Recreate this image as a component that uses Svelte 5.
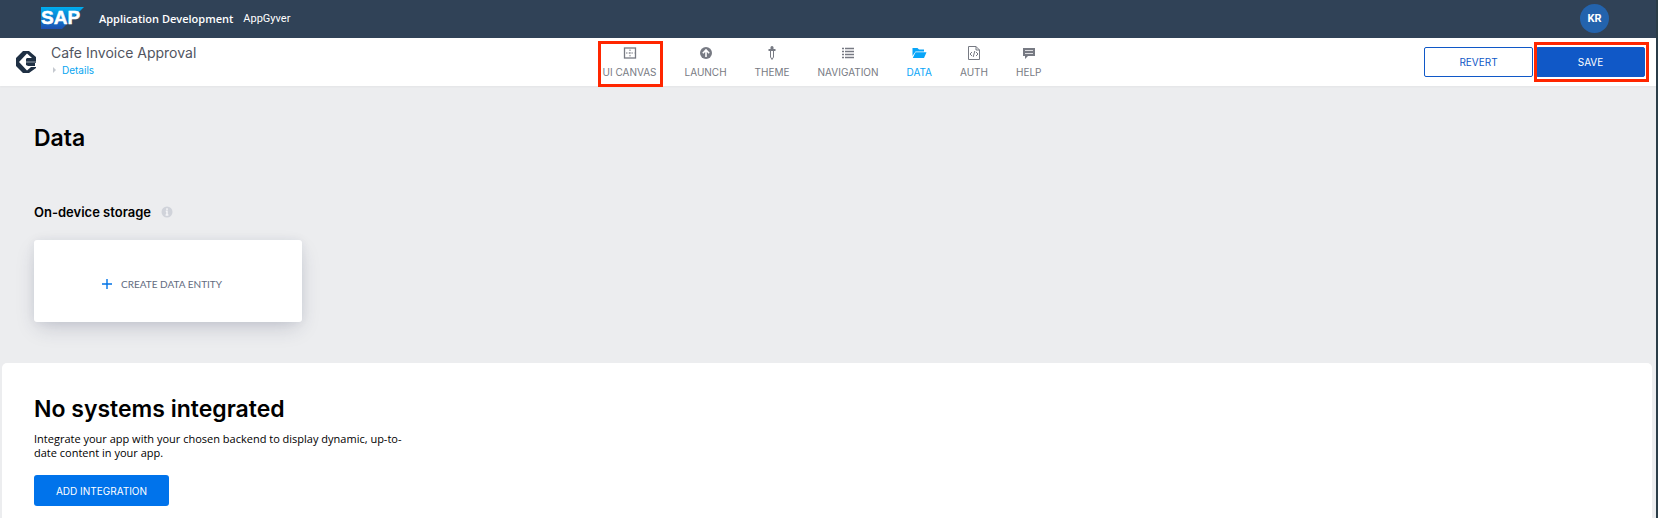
<script>
  const tools = [
    { id: 'canvas', label: 'UI CANVAS', marked: true },
    { id: 'launch', label: 'LAUNCH' },
    { id: 'theme', label: 'THEME' },
    { id: 'navigation', label: 'NAVIGATION' },
    { id: 'data', label: 'DATA' },
    { id: 'auth', label: 'AUTH' },
    { id: 'help', label: 'HELP' }
  ];
  let active = $state('data');
</script>

<div class="app">
  <header class="shell">
    <svg class="sap" width="43" height="22" viewBox="0 0 43 22" role="img" aria-label="SAP">
      <defs>
        <linearGradient id="sapFill" x1="0" y1="0" x2="0" y2="1">
          <stop offset="0" stop-color="#00aeef" />
          <stop offset="0.5" stop-color="#0c7fd0" />
          <stop offset="1" stop-color="#1d4eb0" />
        </linearGradient>
      </defs>
      <path d="M0 0H43L21 22H0Z" fill="url(#sapFill)" />
      <text x="0" y="17" class="sap-text">SAP</text>
    </svg>
    <strong>Application Development</strong>
    <span class="product">AppGyver</span>
    <button class="avatar" aria-label="Profile KR">KR</button>
  </header>

  <div class="toolbar">
    <div class="project">
      <svg width="20" height="22" viewBox="0 0 20 22" aria-hidden="true">
        <path d="M7 0H13L20 6V7H16L11 2.5L3 11L11 19.5L15 16H20V17L13 22H7L0 15V7Z" fill="#1f3044" />
        <path d="M11 7H20V10H10V8Z" fill="#1f3044" />
        <path d="M10 10H20V12H10Z" fill="#5a6877" />
        <path d="M10 12H19V15H12L10 14Z" fill="#1f3044" />
      </svg>
      <div class="names">
        <span class="title">Cafe Invoice Approval</span>
        <a href="#details"><i></i>Details</a>
      </div>
    </div>

    <nav>
      {#each tools as tool}
        <button class="tool" class:active={active === tool.id} class:marked={tool.marked} onclick={() => (active = tool.id)}>
          <svg width="16" height="16" viewBox="0 0 16 16" aria-hidden="true">
            {#if tool.id === 'canvas'}
              <rect x="2.5" y="3" width="11" height="10" fill="none" stroke="currentColor" stroke-width="1.3" />
              <path d="M8 4.5V12M4 8H12.5" fill="none" stroke="currentColor" stroke-dasharray="1.5 1.2" />
            {:else if tool.id === 'launch'}
              <circle cx="8" cy="8" r="6" fill="currentColor" />
              <path d="M8 12V5M4.8 8.2L8 5L11.2 8.2" fill="none" stroke="#fff" stroke-width="1.6" />
            {:else if tool.id === 'theme'}
              <path d="M6.5 2Q8 0 9.5 2V4H11.5V6H4.5V4H6.5Z" fill="currentColor" />
              <path d="M6.5 6V12L8 14.5L9.5 12V6" fill="none" stroke="currentColor" />
            {:else if tool.id === 'navigation'}
              <path d="M5 3.5H14M5 6.5H14M5 9.5H14M5 12.5H14" stroke="currentColor" stroke-width="1.3" />
              <path d="M2 3.5H4M2 6.5H4M2 9.5H4M2 12.5H4" stroke="currentColor" stroke-width="1.3" />
            {:else if tool.id === 'data'}
              <path d="M1.5 3H6.5L8 4.5H13V6.5H4.5L1.5 11Z" fill="currentColor" />
              <path d="M4.5 7.2H15.5L13 13H1.8Z" fill="currentColor" />
            {:else if tool.id === 'auth'}
              <path d="M2.5 1.5H10L13.5 5V14.5H2.5ZM10 1.5V5H13.5" fill="none" stroke="currentColor" />
              <path d="M6 7L4 9L6 11M10 7L12 9L10 11M8.8 6L7.2 12" fill="none" stroke="currentColor" />
            {:else}
              <path d="M2 3H14V11H7L4 14V11H2Z" fill="currentColor" />
              <path d="M4 5.5H12M4 8.5H12" stroke="#fff" stroke-opacity="0.75" />
            {/if}
          </svg>
          <span>{tool.label}</span>
        </button>
      {/each}
    </nav>

    <div class="actions">
      <button class="revert">REVERT</button>
      <button class="save">SAVE</button>
    </div>
  </div>

  <main>
    <section class="storage">
      <h1>Data</h1>
      <h2>
        On-device storage
        <svg width="12" height="12" viewBox="0 0 12 12" aria-hidden="true">
          <circle cx="6" cy="6" r="5.5" fill="#d0d3da" />
          <path d="M6 2.3V4M4.8 5.3H6V9M4.6 9H7.4" fill="none" stroke="#f4f5f7" stroke-width="1.5" />
        </svg>
      </h2>
      <button class="create">
        <svg width="10" height="10" viewBox="0 0 10 10" aria-hidden="true">
          <path d="M5 0V10M0 5H10" stroke="#0073e6" stroke-width="1.4" />
        </svg>
        <span>CREATE DATA ENTITY</span>
      </button>
    </section>

    <section class="systems">
      <h1>No systems integrated</h1>
      <p>Integrate your app with your chosen backend to display dynamic, up-to-date content in your app.</p>
      <button class="add">ADD INTEGRATION</button>
    </section>
  </main>
</div>

<style>
  :global(body) {
    margin: 0;
  }
  .app {
    box-sizing: border-box;
    min-height: 100vh;
    display: flex;
    flex-direction: column;
    border-right: 2px solid #2b3d48;
    background: #ecedef;
    color: #000;
    font-family: Inter, sans-serif;
  }
  button {
    font: inherit;
    margin: 0;
    padding: 0;
    border: 0;
    cursor: pointer;
  }
  svg {
    display: block;
    flex: none;
  }
  .shell {
    box-sizing: border-box;
    height: 38px;
    display: flex;
    align-items: center;
    padding: 0 47px 2px 41px;
    background: #304257;
    color: #fff;
    font-family: Roboto, sans-serif;
    font-size: 11px;
  }
  .shell strong {
    margin-left: 15px;
    font-family: "Open Sans", sans-serif;
    font-weight: 600;
  }
  .sap-text {
    font: 700 19px "Liberation Sans", sans-serif;
    fill: #fff;
    stroke: #fff;
    stroke-width: 0.5px;
  }
  .product {
    margin-left: 10px;
  }
  .avatar {
    width: 29px;
    height: 29px;
    margin-left: auto;
    border-radius: 50%;
    background: #2363ad;
    color: #fff;
    font-weight: 700;
  }
  .toolbar {
    display: grid;
    grid-template-columns: 1fr auto 1fr;
    height: 48px;
    background: #fff;
    box-shadow: 0 1px 2px rgba(0, 0, 0, 0.04);
  }
  .project {
    display: flex;
    align-items: flex-start;
    gap: 15px;
    padding: 6px 0 0 16px;
  }
  .project > svg {
    margin-top: 7px;
  }
  .names {
    display: flex;
    flex-direction: column;
  }
  .title {
    color: #51555f;
    font-size: 14px;
    line-height: 18px;
  }
  .names a {
    display: flex;
    align-items: center;
    gap: 6px;
    padding-left: 2px;
    color: #08a5f0;
    font-size: 10px;
    line-height: 16px;
    text-decoration: none;
  }
  .names i {
    border: solid transparent;
    border-width: 3px 0 3px 3px;
    border-left-color: #c5c9d0;
  }
  nav {
    display: flex;
    gap: 28px;
    padding-right: 12px;
  }
  .tool {
    position: relative;
    display: flex;
    flex-direction: column;
    align-items: center;
    gap: 4px;
    padding-top: 7px;
    background: none;
    color: #777a83;
    font-size: 10px;
    line-height: 14px;
  }
  .tool.active {
    color: #08a5f8;
  }
  .marked::after,
  .save::after {
    content: "";
    position: absolute;
    border: 3px solid #ff2600;
    pointer-events: none;
  }
  .marked::after {
    inset: 3px -6px -1px -5px;
  }
  .actions {
    display: flex;
    justify-content: flex-end;
    align-items: flex-start;
    gap: 3px;
    padding: 9px 11px 0 0;
  }
  .actions button {
    position: relative;
    box-sizing: border-box;
    width: 109px;
    height: 30px;
    border: 1px solid #1058c7;
    border-radius: 2px;
    font-size: 10px;
  }
  .revert {
    background: #fff;
    color: #1058c7;
  }
  .save {
    background: #1058c7;
    color: #fff;
  }
  .save::after {
    inset: -6px -5px -6px -3px;
  }
  main {
    flex: 1;
    display: flex;
    flex-direction: column;
  }
  .storage {
    padding: 36px 34px 41px;
  }
  h1,
  h2,
  p {
    margin: 0;
  }
  h1 {
    font-size: 23px;
    font-weight: 600;
    line-height: 32px;
  }
  h2 {
    display: flex;
    align-items: center;
    gap: 10px;
    margin: 47px 0 17px;
    font-size: 13px;
    font-weight: 600;
    line-height: 22px;
  }
  .create {
    display: flex;
    align-items: center;
    justify-content: center;
    gap: 9px;
    width: 268px;
    height: 82px;
    padding: 6px 12px 0 0;
    border-radius: 3px;
    background: #fff;
    box-shadow: 0 8px 20px -4px rgba(40, 45, 80, 0.22), 0 0 10px rgba(40, 45, 80, 0.06);
    color: #626b80;
    font-family: Lato, sans-serif;
    font-size: 10px;
  }
  .systems {
    flex: 1;
    margin: 0 4px 0 2px;
    padding: 30px 32px 12px;
    border-radius: 5px 5px 0 0;
    background: #fff;
  }
  .systems p {
    max-width: 380px;
    margin: 7px 0 15px;
    font-family: "Open Sans", sans-serif;
    font-size: 11px;
    line-height: 14px;
  }
  .add {
    width: 135px;
    height: 31px;
    border-radius: 3px;
    background: #0073eb;
    color: #fff;
    font-size: 10px;
  }
</style>
